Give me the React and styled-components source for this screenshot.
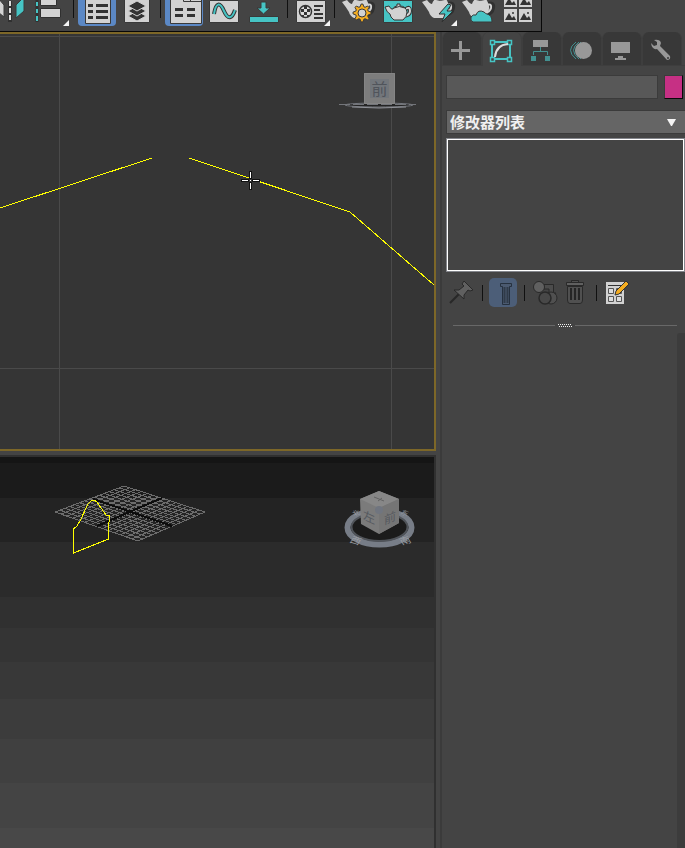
import React from "react";
import styled, { createGlobalStyle } from "styled-components";

const TEAL = "#46c4c4";
const LIGHT = "#d2d2d2";
const DARK = "#393939";

const GlobalStyle = createGlobalStyle`
  * { box-sizing: border-box; }
  body {
    margin: 0;
    background: #444;
    color: #eee;
    font-family: "Noto Sans CJK SC", "Noto Sans", sans-serif;
  }
  button { border: 0; padding: 0; margin: 0; background: none; }
`;

const Page = styled.div`
  display: flex;
  flex-direction: column;
  height: 100vh;
  overflow: hidden;
  background: #444;
`;

const Toolbar = styled.header`
  display: flex;
  align-self: flex-start;
  height: 32px;
  flex: none;
  padding-right: 3px;
  border-right: 1px solid #080808;
  border-bottom: 1px solid #080808;
`;

const ToolButton = styled.button`
  display: flex;
  justify-content: flex-end;
  width: ${(p) => (p.$clipped ? "30px" : "40px")};
  height: 31px;
  overflow: hidden;
  svg { display: block; flex: none; }
`;

const ToolDivider = styled.span`
  width: 7px;
  height: 18px;
  background: linear-gradient(#101010, #101010) 3px 0 / 1px 100% no-repeat;
`;

const Workspace = styled.main`
  display: flex;
  flex: 1;
  min-height: 0;
`;

const Viewports = styled.section`
  display: flex;
  flex-direction: column;
  gap: 4px;
  flex: 1;
  min-width: 0;
`;

const Viewport = styled.div`
  flex: ${(p) => p.$share} 1 0;
  min-height: 0;
  overflow: hidden;
  border: solid ${(p) => (p.$active ? "#7d6728" : "#303030")};
  border-width: ${(p) => (p.$active ? "2px 2px 2px 0" : "2px 2px 0 0")};
  background: #353535;
  svg { display: block; width: 100%; height: 100%; }
`;

const Splitter = styled.div`
  width: 6px;
  border-right: 2px solid #3b3b3b;
`;

const Panel = styled.aside`
  display: flex;
  flex-direction: column;
  width: 243px;
  flex: none;
`;

const Tabs = styled.nav`
  display: flex;
  height: 34px;
  border-bottom: 1px solid #3e3e3e;
`;

const Tab = styled.button`
  flex: 1;
  max-width: 40px;
  height: ${(p) => (p.$active ? "34px" : "33px")};
  border: solid #3e3e3e;
  border-width: 0 1px;
  border-radius: 7px 7px 0 0;
  background: ${(p) => (p.$active ? "#444" : "#383838")};
  svg { display: block; margin: 0 auto; }
`;

const NameRow = styled.div`
  display: flex;
  gap: 6px;
  padding: 9px 2px 0 4px;
`;

const NameInput = styled.input`
  flex: 1;
  min-width: 0;
  height: 24px;
  padding: 0 4px;
  border: 1px solid #3b3b3b;
  background: #585858;
  color: #eee;
  font: 14px "Noto Sans CJK SC", sans-serif;
`;

const Swatch = styled.button`
  width: 19px;
  height: 24px;
  && {
    border: 1px solid;
    border-color: #3b3b3b #080808 #080808 #3b3b3b;
    background: #c63084;
  }
`;

const ModifierSelect = styled.select`
  appearance: none;
  height: 24px;
  margin: 11px 0 0 4px;
  padding: 0 24px 0 3px;
  border: 1px solid #3b3b3b;
  border-right: 0;
  border-radius: 0;
  background: #656565;
  color: #f0f0f0;
  font: bold 15px/20px "Noto Sans CJK SC", sans-serif;
`;

const SelectField = styled.div`
  display: grid;
  > * { grid-area: 1 / 1; }
  > svg {
    align-self: end;
    justify-self: end;
    margin: 0 9px 8px 0;
    pointer-events: none;
  }
`;

const ModifierStack = styled.div`
  height: 134px;
  margin: 4px 0 0 4px;
  border: 1px solid #84868c;
  box-shadow: inset 0 0 0 1px #fff;
`;

const StackTools = styled.div`
  display: flex;
  align-items: center;
  height: 29px;
  margin: 6px 0 0 4px;
`;

const StackButton = styled.button`
  width: ${(p) => p.$width};
  height: 29px;
  display: grid;
  place-items: center;
  && {
    background: ${(p) => (p.$active ? "#4c5e78" : "none")};
    border-radius: 5px;
  }
`;

const StackDivider = styled.span`
  width: 14px;
  height: 16px;
  background: linear-gradient(#101010, #101010) center / 1px 100% no-repeat;
`;

const Handle = styled.div`
  display: flex;
  align-items: center;
  gap: 3px;
  height: 8px;
  margin: 14px 8px 0 11px;
`;

const HandleLine = styled.span`
  flex: 1;
  height: 1px;
  background: #686868;
`;

const Rollouts = styled.div`
  flex: 1;
  margin-top: 4px;
  display: flex;
  justify-content: flex-end;
`;

const ScrollTrack = styled.div`
  width: 8px;
  border-radius: 3px 0 0 0;
  background: #3c3c3c;
`;

const Icon = ({ children }) => (
  <svg width="40" height="31" viewBox="0 0 40 31" aria-hidden="true">{children}</svg>
);

const Flyout = () => <path d="M39 20v6h-6z" fill="#f4f4f4" />;

const Selected = () => <path d="M1 0H39V22Q39 26 35 26H5Q1 26 1 22Z" fill="#5b88c5" />;

const Teapot = () => (
  <g>
    <path d="M29 4Q36 2 35 8Q34 14 27 15" fill="none" stroke="#303030" strokeWidth="4" />
    <path d="M29 5Q34 3 33 8Q32 12 27 13" fill="none" stroke={LIGHT} strokeWidth="2" />
    <path d="M4 2L9 0Q12 4 14 4Q15 0 18-1H28Q33 6 30 12Q28 17 25 18H16Q12 16 11 12Q8 7 4 2Z" fill={LIGHT} />
    <path d="M16-1Q22 2 29-1" stroke="#444" fill="none" />
  </g>
);

const gearPath = Array.from({ length: 32 }, (_, i) => {
  const radius = i % 4 < 2 ? 9 : 6.5;
  const angle = ((i - 0.5) * Math.PI) / 16;
  return `${i ? "L" : "M"}${24 + radius * Math.cos(angle)} ${13 + radius * Math.sin(angle)}`;
}).join("") + "Z";

const icons = {
  mirror: (
    <Icon>
      <path d="M8-2L14 5V17L8 12Z" fill={LIGHT} stroke={DARK} />
      <path d="M20 1V22" stroke="#303030" strokeWidth="4" />
      <path d="M20 1V6M20 8V13M20 15V20" stroke="#ddd" strokeWidth="2" />
      <path d="M26 5L34-3V11L26 18Z" fill={TEAL} stroke={DARK} />
    </Icon>
  ),
  align: (
    <Icon>
      <path d="M7 0V22" stroke="#303030" strokeWidth="3" />
      <path d="M7 2V6M7 9V13M7 16V21" stroke={TEAL} strokeWidth="2" />
      <path d="M10.5-2H26.5V5.500H10.500ZM10.500 8.500H30.500V17.500H10.500Z" fill={LIGHT} stroke="#303030" />
      <Flyout />
    </Icon>
  ),
  explorer: (
    <Icon>
      <Selected />
      <path d="M8.500-1H33.500V23.500H8.500Z" fill={LIGHT} stroke={DARK} />
      <path d="M11 5.500H16M19 5.500H31M11 11.500H16M19 11.500H31M11 17.500H16M19 17.500H31" stroke="#333" strokeWidth="3" />
    </Icon>
  ),
  layers: (
    <Icon>
      <path d="M7.500-1H32.500V22.500H7.500Z" fill={LIGHT} stroke={DARK} />
      {[16, 11, 6].map((y) => (
        <path key={y} d={`M11 ${y}L20 ${y - 5}L29 ${y}L20 ${y + 5}Z`} fill="#333" stroke={LIGHT} />
      ))}
    </Icon>
  ),
  ribbon: (
    <Icon>
      <Selected />
      <path d="M6.500-1H37.500V23.500H6.500Z" fill={LIGHT} stroke={DARK} />
      <path d="M19.500-1V1.500H37.500M26.500-1V1.500" stroke={DARK} fill="none" />
      <path d="M11 9.500H19M23 9.500H31M11 15.500H19M23 15.500H31" stroke="#333" strokeWidth="3" />
    </Icon>
  ),
  curve: (
    <Icon>
      <path d="M5.500 0.500H34.500V22.500H5.500Z" fill={LIGHT} stroke={DARK} />
      <path d="M10 14C12 2 16 2 20 11S28 19 31 10" fill="none" stroke="#333" strokeWidth="4" />
      <path d="M10 14C12 2 16 2 20 11S28 19 31 10" fill="none" stroke={TEAL} strokeWidth="2" />
    </Icon>
  ),
  schematic: (
    <Icon>
      <path d="M17 2H22V8H26L19.500 14L13 8H17Z" fill={TEAL} stroke={DARK} />
      <path d="M5.500 16.500H34.500V22.500H5.500Z" fill={TEAL} stroke={DARK} />
    </Icon>
  ),
  material: (
    <Icon>
      <path d="M5.500 0.500H34.500V22.500H5.500Z" fill={LIGHT} stroke={DARK} />
      <circle cx="14.500" cy="11.500" r="6" fill="#ddd" stroke="#333" strokeWidth="1.500" />
      <path d="M13 9H16V6H13ZM10 9H13V12H10ZM16 9H19V12H16ZM13 12H16V15H13ZM10 15H13V17H11ZM16 15H19L17 17H16Z" fill="#333" />
      <path d="M23 6H32M23 10H29M23 14H32M23 18H32" stroke="#333" strokeWidth="2" />
      <Flyout />
    </Icon>
  ),
  renderSetup: (
    <Icon>
      <Teapot />
      <path d={gearPath} fill="#f5ad20" stroke={DARK} />
      <circle cx="24" cy="13" r="4" fill={LIGHT} stroke={DARK} />
    </Icon>
  ),
  frame: (
    <Icon>
      <path d="M5.500 0.500H34.500V22.500H5.500Z" fill={TEAL} stroke={DARK} />
      <path d="M28 9Q32 6 32 11Q32 15 26 16" fill="none" stroke="#333" strokeWidth="4" />
      <path d="M28 9Q32 6 32 11Q32 15 26 16" fill="none" stroke={LIGHT} strokeWidth="2" />
      <path d="M7 7L11 6Q13 10 15 9Q16 6 19 6V4H22V6Q28 6 29 12Q29 17 25 20H16Q12 17 12 14Q9 13 7 7Z" fill={LIGHT} stroke="#333" />
      <path d="M16 8Q21 5 27 8" stroke="#333" fill="none" />
    </Icon>
  ),
  quickRender: (
    <Icon>
      <Teapot />
      <path d="M30 4L21 14H27L24 22L35 11H29L33 5Z" fill={TEAL} stroke="#303030" />
      <Flyout />
    </Icon>
  ),
  cloudRender: (
    <Icon>
      <Teapot />
      <path d="M15 22Q12 21 13 17Q15 14 18 15Q20 9 26 12Q28 14 29 14Q34 15 34 22Z" fill={TEAL} stroke={DARK} />
    </Icon>
  ),
  gallery: (
    <Icon>
      {[[6, -6], [21, -6], [6, 9], [21, 9]].map(([x, y]) => (
        <g key={`${x}${y}`} transform={`translate(${x} ${y})`}>
          <path d="M0 0H13V13H0Z" fill={LIGHT} />
          <path d="M1 11L5 4L8 9L10 7L12 11Z" fill="#333" />
          <circle cx="9" cy="4" r="1" fill="#333" />
        </g>
      ))}
    </Icon>
  ),
};

const toolGroups = [
  [["mirror", "镜像"], ["align", "对齐"]],
  [["explorer", "场景资源管理器"], ["layers", "层资源管理器"]],
  [["ribbon", "功能区"], ["curve", "曲线编辑器"], ["schematic", "图解视图"]],
  [["material", "材质编辑器"]],
  [["renderSetup", "渲染设置"], ["frame", "渲染帧窗口"], ["quickRender", "渲染产品"], ["cloudRender", "云渲染"], ["gallery", "图库"]],
];

const tabs = [
  ["创建", <path d="M9 18.500H28M18.500 9V28" stroke="#989898" strokeWidth="3" />],
  ["修改", (
    <g fill="none" stroke={TEAL}>
      <path d="M13 9H26M13 26H26M10 12V24M28 12V24" strokeWidth="2" />
      <path d="M8.500 7.500H12.500V11.500H8.500ZM25.500 7.500H29.500V11.500H25.500ZM8.500 24.500H12.500V28.500H8.500ZM25.500 24.500H29.500V28.500H25.500Z" strokeWidth="1.500" />
      <path d="M13 24Q14 12 26 11" stroke="#ddd" strokeWidth="2" />
    </g>
  )],
  ["层次", (
    <g>
      <path d="M11 8H26V15H11Z" fill="#989898" />
      <path d="M18.500 15V19M11.500 23V19.500H25.500V23" stroke="#439090" fill="none" />
      <path d="M9 24H14V29H9ZM23 24H28V29H23Z" fill="#439090" />
    </g>
  )],
  ["运动", (
    <g fill="none" stroke="#439090">
      <path d="M14 10Q3 18 14 27M17 10Q6 18 17 27M19 10Q8 18 19 27" />
      <circle cx="21.500" cy="18.500" r="8.500" fill="#989898" stroke="none" />
    </g>
  )],
  ["显示", <path d="M9 10H28V21H9ZM16 24H21V26H24V28H13V26H16Z" fill="#989898" />],
  ["实用程序", (
    <g>
      <path d="M9 11L12 14L15 13V10L12 8Q18 7 19 11L18 14L28 24Q29 28 25 28L15 17Q10 18 9 11Z" fill="#989898" />
      <circle cx="26" cy="26" r="1" fill="#383838" />
    </g>
  )],
];

const StackIcon = ({ children }) => (
  <svg width="26" height="27" viewBox="0 0 26 27" aria-hidden="true">{children}</svg>
);

const bands = [
  [457, 6, "#151515"], [463, 35, "#1b1b1b"], [498, 44, "#232323"], [542, 55, "#2b2b2b"],
  [597, 31, "#303030"], [628, 34, "#343434"], [662, 37, "#383838"], [699, 40, "#3c3c3c"],
  [739, 44, "#404040"], [783, 45, "#444444"], [828, 20, "#484848"],
];

const lerp = (a, b, t) => [a[0] + (b[0] - a[0]) * t, a[1] + (b[1] - a[1]) * t];
const corners = { top: [124, 486], right: [205, 512], bottom: [138, 541], left: [55, 512] };
const groundGrid = Array.from({ length: 15 }, (_, i) => {
  const t = i / 14;
  const { top, right, bottom, left } = corners;
  return `M${lerp(top, right, t)}L${lerp(left, bottom, t)}M${lerp(top, left, t)}L${lerp(right, bottom, t)}`;
}).join("");

const FrontView = () => (
  <svg viewBox="0 34 434 415" preserveAspectRatio="xMinYMin slice" role="img" aria-label="前视图">
    <path d="M0 36.500H434M0 368.500H434M59.500 34V449M391.500 34V449" stroke="#4a4a4a" />
    <ellipse cx="379" cy="105" rx="34" ry="2" fill="#242424" stroke="#74777d" />
    <path d="M339 104.500H416" stroke="#73757a" strokeDasharray="11 3" />
    <path d="M352 107Q379 109 406 107" fill="none" stroke="#909298" />
    <path d="M364 73H395V104H364Z" fill="#7d7d7d" />
    <path d="M364.500 73.500H394.500V103.500H364.500Z" fill="none" stroke="#858585" />
    <path d="M370 79H389V98H370Z" fill="#72767b" />
    <text x="379.500" y="95" textAnchor="middle" fontSize="16" fill="#50545b">前</text>
    <path d="M0 208L152 158M189 158L350 212L434 285" fill="none" stroke="#ffff00" shapeRendering="crispEdges" />
    <path d="M241 180.500H249M252 180.500H260M250.500 171V179M250.500 182V190" stroke="#111" strokeWidth="3" />
    <path d="M242 180.500H248M253 180.500H259M250.500 172V178M250.500 183V189M250 180.500H251" stroke="#fff" />
  </svg>
);

const PerspectiveView = () => (
  <svg viewBox="0 457 434 391" preserveAspectRatio="xMinYMin slice" role="img" aria-label="透视图">
    {bands.map(([y, height, fill]) => (
      <rect key={y} y={y} width="434" height={height} fill={fill} />
    ))}
    <path d={groundGrid} fill="none" stroke="#6c6c6c" shapeRendering="crispEdges" />
    <path d="M162 498L97 526M93 499L172 526" stroke="#0c0c0c" strokeWidth="2" shapeRendering="crispEdges" />
    <path
      d="M73.500 529V553L108.500 539V529L109.500 515H106L97 502L94 500L91 501L88 504L80 521L77 526Z"
      fill="none" stroke="#ffff00" shapeRendering="crispEdges"
    />
    <ellipse cx="379.500" cy="527.500" rx="32" ry="17" fill="#1b1b1b" stroke="#777d87" strokeWidth="6" />
    <ellipse cx="379.500" cy="527" rx="28" ry="14" fill="none" stroke="#50545a" strokeWidth="2" />
    <g fill="#9a9ea4" fontSize="10">
      <text transform="matrix(1 .3 -.5 .8 349 542)">西</text>
      <text transform="matrix(1 -.3 .5 .8 402 545)">南</text>
      <text transform="matrix(1 -.3 .5 .8 354 516)" fontSize="7">北</text>
      <text transform="matrix(1 .3 -.5 .8 400 514)" fontSize="7">东</text>
    </g>
    <path d="M360 499L379 491L399 499V523L379 534L361 524Z" fill="#7b7b7b" />
    <path d="M360 499L379 491L399 499L379 508Z" fill="#878787" />
    <path d="M379 508L399 499V523L379 534Z" fill="#757575" />
    <path d="M374 497L384 501M378 501L382 498" stroke="#636363" />
    <circle cx="379" cy="510" r="4" fill="#70757f" />
    <g fill="#55595f" fontSize="12">
      <text transform="matrix(1 .45 0 1 363 519)">左</text>
      <text transform="matrix(1 -.45 0 1 384 525)">前</text>
    </g>
  </svg>
);

export default function App() {
  return (
    <>
      <GlobalStyle />
      <Page>
        <Toolbar>
          {toolGroups.map((group, index) => (
            <React.Fragment key={group[0][0]}>
              {index > 0 && <ToolDivider />}
              {group.map(([name, label]) => (
                <ToolButton key={name} aria-label={label} $clipped={name === "mirror"}>
                  {icons[name]}
                </ToolButton>
              ))}
            </React.Fragment>
          ))}
        </Toolbar>
        <Workspace>
          <Viewports>
            <Viewport $active $share={415}><FrontView /></Viewport>
            <Viewport $share={391}><PerspectiveView /></Viewport>
          </Viewports>
          <Splitter />
          <Panel>
            <Tabs>
              {tabs.map(([label, drawing]) => (
                <Tab key={label} aria-label={label} $active={label === "修改"}>
                  <svg width="38" height="33" viewBox="1 0 38 33" aria-hidden="true">{drawing}</svg>
                </Tab>
              ))}
            </Tabs>
            <NameRow>
              <NameInput aria-label="对象名称" />
              <Swatch aria-label="对象颜色" />
            </NameRow>
            <SelectField>
              <ModifierSelect aria-label="修改器列表">
                <option>修改器列表</option>
              </ModifierSelect>
              <svg width="9" height="7" viewBox="0 0 9 7" aria-hidden="true">
                <path d="M0 0H9L5 7H4Z" fill="#f4f4f4" />
              </svg>
            </SelectField>
            <ModifierStack role="listbox" aria-label="修改器堆栈" />
            <StackTools>
              <StackButton $width="29px" aria-label="锁定堆栈">
                <StackIcon>
                  <path d="M2 24L11 15" stroke="#282828" strokeWidth="2" />
                  <path d="M16 2L25 11L22 12L20 11L16 16V20L6 11H11L16 7L14 5Z" fill="#606060" stroke="#292929" />
                </StackIcon>
              </StackButton>
              <StackDivider />
              <StackButton $active $width="28px" aria-label="显示最终结果">
                <StackIcon>
                  <path d="M10.500 4.500H21.500V7.500H19.500V25.500H12.500V7.500H10.500Z" fill="#4b5a70" stroke="#26313f" />
                  <path d="M14.500 8V24M17.500 8V24" stroke="#303b49" strokeWidth="2" />
                </StackIcon>
              </StackButton>
              <StackDivider />
              <StackButton $width="28px" aria-label="使唯一">
                <StackIcon>
                  <path d="M12 5.500H21.500V14H24L19 20L14 14H17V10H12Z" fill="#4c4c4c" stroke="#292929" />
                  <circle cx="19" cy="19" r="6" fill="#505050" stroke="#292929" />
                  <circle cx="13" cy="19" r="6" fill="#484848" stroke="#292929" strokeWidth="1.500" />
                  <circle cx="7" cy="8" r="5.500" fill="#606060" stroke="#292929" />
                </StackIcon>
              </StackButton>
              <StackButton $width="30px" aria-label="移除修改器">
                <StackIcon>
                  <path d="M10.500 4.500V1.500H17.500V4.500M6.500 7.500H21.500V21Q21.500 24.500 19 24.500H9Q6.500 24.500 6.500 21Z" fill="#505050" stroke="#292929" />
                  <path d="M5.500 3.500H22.500V6.500H5.500Z" fill="#606060" stroke="#292929" />
                  <path d="M10 9V21M14 9V21M18 9V21" stroke="#252525" strokeWidth="2" />
                </StackIcon>
              </StackButton>
              <StackDivider />
              <StackButton $width="28px" aria-label="配置修改器集">
                <StackIcon>
                  <path d="M2 3H20V25H2Z" fill={LIGHT} />
                  <path d="M4 6.500H18" stroke="#333" />
                  <path d="M4.500 9.500H9.500V14.500H4.500ZM12.500 9.500H17.500V14.500H12.500ZM4.500 17.500H9.500V22.500H4.500ZM12.500 17.500H17.500V22.500H12.500Z" fill="#ddd" stroke="#555" />
                  <path d="M11 16L12 12L22 2L25 5L15 15Z" fill="#f5ad20" stroke="#333" />
                </StackIcon>
              </StackButton>
            </StackTools>
            <Handle>
              <HandleLine />
              <svg width="14" height="3" viewBox="0 0 14 3" aria-hidden="true">
                <path d="M0 .5H13M1 2.500H14" stroke="#eee" strokeDasharray="1 1" />
              </svg>
              <HandleLine />
            </Handle>
            <Rollouts><ScrollTrack /></Rollouts>
          </Panel>
        </Workspace>
      </Page>
    </>
  );
}
